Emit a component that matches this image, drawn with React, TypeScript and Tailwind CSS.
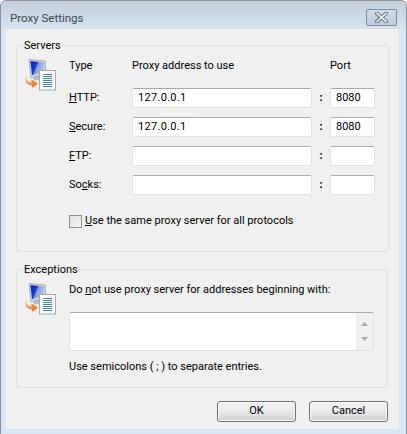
import React from "react";

function NetIcon() {
  return (
    <svg width="32" height="32" viewBox="0 0 32 32" className="shrink-0">
      <defs>
        <linearGradient id="scr" x1="0" y1="0" x2="1" y2="0.4">
          <stop offset="0" stopColor="#0a1aa8" />
          <stop offset="0.45" stopColor="#1c3cd0" />
          <stop offset="0.55" stopColor="#7f9ad8" />
          <stop offset="1" stopColor="#b4c6e6" />
        </linearGradient>
        <linearGradient id="arr" x1="0" y1="0" x2="1" y2="0.6">
          <stop offset="0" stopColor="#d8c8bc" />
          <stop offset="0.5" stopColor="#e89a60" />
          <stop offset="1" stopColor="#ee7420" />
        </linearGradient>
      </defs>
      <path d="M4 0.5 L20 2 L21 15 L6 19 Z" fill="#d3d8e0" stroke="#9aa2ae" strokeWidth="0.8" />
      <path d="M5.5 2 L19 3.5 L19.5 13 L7 16 Z" fill="url(#scr)" />
      <path d="M8 17.5 L18 16 L19 20 L9 21.5 Z" fill="#b4bac4" />
      <rect x="14.5" y="11.5" width="16" height="19.5" fill="#f9fafc" stroke="#a6aaaf" strokeWidth="1" />
      <rect x="18" y="15" width="9" height="1" fill="#3f84d0" />
      <rect x="18" y="17" width="9" height="1" fill="#3f84d0" />
      <rect x="18" y="19" width="9" height="1" fill="#3f84d0" />
      <rect x="18" y="21" width="9" height="1" fill="#3f84d0" />
      <rect x="18" y="23" width="9" height="1" fill="#3f84d0" />
      <rect x="18" y="25" width="9" height="1" fill="#3f84d0" />
      <rect x="18" y="27" width="9" height="1" fill="#3f84d0" />
      <path d="M2.5 16 C0 19 1.5 23 6.5 23.5 L6.5 20.5 L13 24.5 L7.5 29 L7 26.5 C1 27 -2 20 2.5 16 Z" fill="url(#arr)" />
    </svg>
  );
}

function Field({ value, className }: { value?: string; className: string }) {
  return (
    <div className={`h-[20px] bg-white border border-[#dfe3e8] border-t-[#ababab] rounded-[2px] pl-[5px] leading-[18px] text-black ${className}`}>
      {value}
    </div>
  );
}

function Row({ label, ul, rest, value, port }: { label?: string; ul: string; rest: string; value?: string; port?: string }) {
  return (
    <div className="flex items-center h-[20px]">
      <span className="w-[63px] pt-[1px]">
        {label}
        <span className="underline">{ul}</span>
        {rest}
      </span>
      <Field value={value} className="w-[180px] tracking-[0.3px]" />
      <span className="w-[18px] text-center font-bold text-[11px] leading-[16px]">:</span>
      <Field value={port} className="w-[45px]" />
    </div>
  );
}

export default function App() {
  return (
    <div
      className="w-[407px] h-[434px] overflow-hidden flex flex-col bg-[#d8e6f3] text-[11px] text-black border-t border-x border-[#8a9199] rounded-t-[6px]"
      style={{ fontFamily: 'Roboto, "Open Sans", sans-serif' }}
    >
      <div className="h-[28px] shrink-0 flex items-start bg-gradient-to-b from-[#c3ced8] to-[#d6e5f3] pl-[9px] pr-[9px]">
        <span className="mt-[8px] text-[11.5px] leading-[18px] text-[#3c4650]">Proxy Settings</span>
        <div className="ml-auto mt-[8px] w-[31px] h-[17px] border border-[#7f8ea2] rounded-[2px] bg-gradient-to-b from-[#d0dbe7] to-[#bccadb] flex items-center justify-center">
          <svg width="13" height="11" viewBox="0 0 13 11">
            <path d="M2 1.5 L11 9.5 M11 1.5 L2 9.5" stroke="#5a6470" strokeWidth="3.6" strokeLinecap="square" />
            <path d="M2 1.5 L11 9.5 M11 1.5 L2 9.5" stroke="#eceff2" strokeWidth="1.8" strokeLinecap="square" />
          </svg>
        </div>
      </div>
      <div className="ml-[5px] mr-[7px] h-[400px] bg-[#f0f0f0] pl-[10px] pr-[11px] flex flex-col">
        <fieldset className="h-[215px] mt-[8px] border border-[#dcdfe3] rounded-[3px] pl-[8px] pr-[13px]">
          <legend className="ml-[-2px] px-[1px] pt-[2px] leading-[14px]">Servers</legend>
          <div className="flex">
            <div className="w-[44px] pt-[6px]"><NetIcon /></div>
            <div className="flex flex-col flex-1">
              <div className="flex h-[20px] mt-[3px] items-center">
                <span className="w-[63px]">Type</span>
                <span className="w-[198px]">Proxy address to use</span>
                <span>Port</span>
              </div>
              <div className="flex flex-col gap-[9px] mt-[12px]">
                <Row ul="H" rest="TTP:" value="127.0.0.1" port="8080" />
                <Row ul="S" rest="ecure:" value="127.0.0.1" port="8080" />
                <Row ul="F" rest="TP:" />
                <Row label="So" ul="c" rest="ks:" />
              </div>
              <div className="flex items-center mt-[17px] h-[18px]">
                <div className="w-[13px] h-[13px] border border-[#8f8f8f] bg-gradient-to-br from-[#dedede] to-[#f6f6f6] mr-[3px]" />
                <span className="pt-[1px]"><span className="underline">U</span>se the same proxy server for all protocols</span>
              </div>
            </div>
          </div>
        </fieldset>
        <fieldset className="h-[127px] mt-[9px] border border-[#dcdfe3] rounded-[3px] pl-[8px] pr-[13px]">
          <legend className="ml-[-2px] px-[1px] pt-[2px] leading-[14px]">Exceptions</legend>
          <div className="flex">
            <div className="w-[44px] pt-[6px]"><NetIcon /></div>
            <div className="flex flex-col flex-1">
              <div className="h-[18px] mt-[4px] leading-[18px]">Do <span className="underline">n</span>ot use proxy server for addresses beginning with:</div>
              <div className="mt-[13px] h-[39px] flex bg-white border border-[#dfe3e8] border-t-[#ababab] rounded-[2px]">
                <div className="flex-1" />
                <div className="w-[17px] bg-[#f0f0f0] flex flex-col items-center justify-between py-[9px]">
                  <svg width="7" height="4" viewBox="0 0 7 4"><path d="M0 4 L3.5 0 L7 4 Z" fill="#a9a9a9" /></svg>
                  <svg width="7" height="4" viewBox="0 0 7 4"><path d="M0 0 L7 0 L3.5 4 Z" fill="#a9a9a9" /></svg>
                </div>
              </div>
              <div className="mt-[7px] h-[18px] leading-[18px]">Use semicolons ( ; ) to separate entries.</div>
            </div>
          </div>
        </fieldset>
        <div className="flex justify-end gap-[13px] mt-[13px]">
          <button className="w-[79px] h-[21px] border border-[#707070] rounded-[3px] bg-gradient-to-b from-[#f2f2f2] via-[#ebebeb] to-[#cfcfcf] shadow-[inset_0_0_0_1px_#fbfbfb]">OK</button>
          <button className="w-[79px] h-[21px] border border-[#707070] rounded-[3px] bg-gradient-to-b from-[#f2f2f2] via-[#ebebeb] to-[#cfcfcf] shadow-[inset_0_0_0_1px_#fbfbfb]">Cancel</button>
        </div>
      </div>
    </div>
  );
}
